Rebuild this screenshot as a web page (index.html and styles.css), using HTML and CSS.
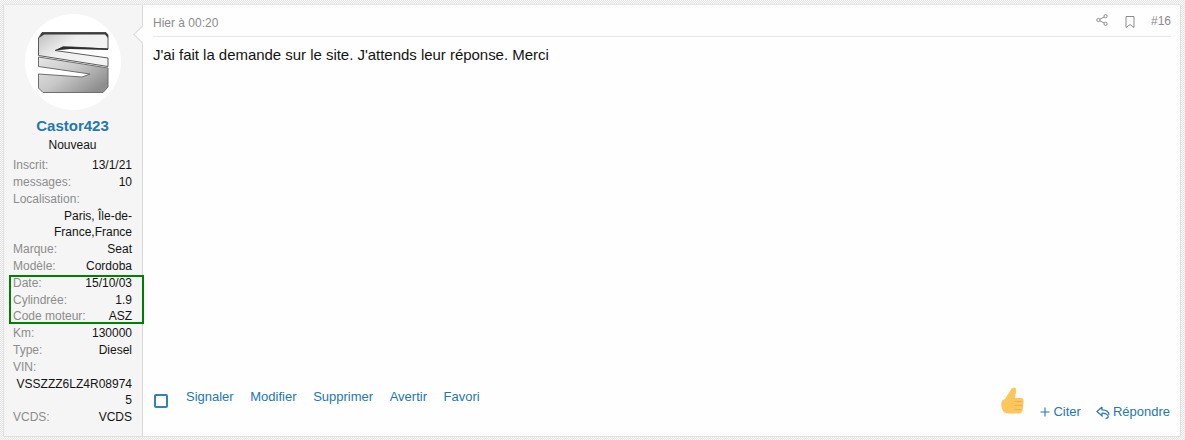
FILE: index.html
```html
<!DOCTYPE html>
<html lang="fr">
<head>
    <meta charset="UTF-8">
    <title>Message #16</title>
    <link rel="stylesheet" href="styles.css">
</head>
<body>
    <article class="message">
        <aside class="user">
            <div class="avatar">
                <svg viewBox="37 31 72 63" width="72" height="63">
                    <defs>
                        <linearGradient id="top" x1="0" y1="0" x2="1" y2="0.7">
                            <stop offset="0" stop-color="#bdbdbd"/>
                            <stop offset="0.45" stop-color="#efefef"/>
                            <stop offset="1" stop-color="#f4f4f4"/>
                        </linearGradient>
                        <linearGradient id="bottom" x1="0" y1="0" x2="1" y2="0.7">
                            <stop offset="0" stop-color="#e6e6e6"/>
                            <stop offset="0.5" stop-color="#c8c8c8"/>
                            <stop offset="1" stop-color="#8e8e8e"/>
                        </linearGradient>
                    </defs>
                    <path d="M38.500 38L42 32.500H106L108 35V49L72 47H63L55 50.500L108 58V66.500L38.500 55.500Z" fill="url(#top)" stroke="#5c5c5c" stroke-width="1"/>
                    <path d="M42 32.500H106L108 35V38L105 34.500H44L39 38Z" fill="#3c3c3c"/>
                    <path d="M55 50.500L63 46.500L108 48.500V50L70 49Z" fill="#2e2e2e"/>
                    <path d="M38.500 57L108 68V87L103 92.500H43L38.500 88V74L82 77L90 74L38.500 66.500Z" fill="url(#bottom)" stroke="#6e6e6e" stroke-width="1"/>
                </svg>
            </div>
            <a class="username" href="#">Castor423</a>
            <div class="user-title">Nouveau</div>
            <dl class="extras">
                <div class="pair"><dt>Inscrit:</dt><dd>13/1/21</dd></div>
                <div class="pair"><dt>messages:</dt><dd>10</dd></div>
                <div class="pair stacked"><dt>Localisation:</dt><dd>Paris, Île-de-France,France</dd></div>
                <div class="pair"><dt>Marque:</dt><dd>Seat</dd></div>
                <div class="pair"><dt>Modèle:</dt><dd>Cordoba</dd></div>
                <div class="highlight">
                    <div class="pair"><dt>Date:</dt><dd>15/10/03</dd></div>
                    <div class="pair"><dt>Cylindrée:</dt><dd>1.9</dd></div>
                    <div class="pair"><dt>Code moteur:</dt><dd>ASZ</dd></div>
                </div>
                <div class="pair"><dt>Km:</dt><dd>130000</dd></div>
                <div class="pair"><dt>Type:</dt><dd>Diesel</dd></div>
                <div class="pair stacked"><dt>VIN:</dt><dd>VSSZZZ6LZ4R089745</dd></div>
                <div class="pair"><dt>VCDS:</dt><dd>VCDS</dd></div>
            </dl>
        </aside>
        <div class="main">
            <header class="attribution">
                <span class="date">Hier à 00:20</span>
                <div class="tools">
                    <svg class="tool share" viewBox="0 0 12 12" width="12" height="12">
                        <circle cx="9.600" cy="2.200" r="1.600"/>
                        <circle cx="2.400" cy="6" r="1.600"/>
                        <circle cx="9.600" cy="9.800" r="1.600"/>
                        <path d="M3.800 5.200L8.200 3M3.800 6.800L8.200 9"/>
                    </svg>
                    <svg class="tool bookmark" viewBox="0 0 10 12" width="10" height="12">
                        <path d="M1 0.500H9V11.500L5 8.500L1 11.500Z"/>
                    </svg>
                    <span class="number">#16</span>
                </div>
            </header>
            <div class="body">J'ai fait la demande sur le site. J'attends leur réponse. Merci</div>
            <footer class="actions">
                <div class="actions-left">
                    <span class="check"></span>
                    <a href="#">Signaler</a>
                    <a href="#">Modifier</a>
                    <a href="#">Supprimer</a>
                    <a href="#">Avertir</a>
                    <a href="#">Favori</a>
                </div>
                <div class="actions-right">
                    <svg class="thumb" viewBox="0 0 23 27" width="23" height="27">
                        <path d="M4 12L10 2.500Q12 -0.500 14.500 1Q15.500 2 15 5L14 11H21Q23 12 22.500 15L21.500 24Q20.500 26.500 18 26.500H8Q2.500 26.500 1 22Q-0.500 17 1 14Q2 12.500 4 12Z" fill="#fcc65f"/>
                        <path d="M13.500 14.500H21.500M13.500 18.500H21.500M13.500 22.500H20.500" stroke="#eeb050" stroke-width="1" fill="none"/>
                    </svg>
                    <a class="cite" href="#">
                        <svg viewBox="0 0 11 11" width="10" height="10"><path d="M5.500 0.500V10.500M0.500 5.500H10.500"/></svg>
                        Citer
                    </a>
                    <a class="reply" href="#">
                        <svg viewBox="0 0 14 13" width="14" height="13"><path d="M6 1L1 5.500L6 10V7.200Q10 7 11.500 9Q13.500 12 9.500 12.500M6 1V3.800Q13 4 13 9"/></svg>
                        Répondre
                    </a>
                </div>
            </footer>
        </div>
    </article>
</body>
</html>
```

FILE: styles.css
```css
* {
    box-sizing: border-box;
}
html, body {
    height: 100%;
}
body {
    margin: 0;
    padding: 4px 4px 3px 3px;
    font-family: "Liberation Sans", Arial, sans-serif;
    color: #141414;
    background-color: #fafafa;
    background-image: repeating-conic-gradient(#e4e4e4 0 25%, #fafafa 0 50%);
    background-size: 2px 2px;
}
a {
    color: #2577b1;
    text-decoration: none;
}
.message {
    display: flex;
    height: 100%;
    background: #fefefe;
    border: 1px solid #dfdfdf;
    border-top-color: #e4e4e4;
    border-radius: 2px;
}
.user {
    position: relative;
    flex: 0 0 139px;
    padding: 9px 10px 0 9px;
    background: #f5f5f5;
    border-right: 1px solid #d8d8d8;
    text-align: center;
}
.user::after {
    content: "";
    position: absolute;
    top: 23px;
    right: -7px;
    width: 12px;
    height: 12px;
    background: #fefefe;
    border-left: 1px solid #d8d8d8;
    border-bottom: 1px solid #d8d8d8;
    transform: rotate(45deg);
}
.avatar {
    display: flex;
    align-items: center;
    justify-content: center;
    width: 96px;
    height: 96px;
    margin: 0 auto;
    border-radius: 50%;
    background: #fff;
}
.username {
    display: block;
    margin-top: 7px;
    font-size: 15px;
    line-height: 18px;
    font-weight: bold;
}
.user-title {
    font-size: 12px;
    line-height: 18px;
    margin-top: 1px;
}
.extras {
    margin: 3.200px 0 0;
    font-size: 12px;
    line-height: 16.800px;
    text-align: left;
}
.pair {
    display: flex;
    justify-content: space-between;
}
.pair.stacked {
    display: block;
}
dt {
    color: #8c8c8c;
}
dd {
    margin: 0;
    text-align: right;
    overflow-wrap: anywhere;
}
.highlight {
    position: relative;
}
.highlight::after {
    content: "";
    position: absolute;
    top: 0;
    left: -4px;
    right: -12px;
    height: 49px;
    box-sizing: border-box;
    border: 2px solid #008000;
}
.main {
    flex: 1;
    display: flex;
    flex-direction: column;
    padding: 0 9px 0 10px;
}
.attribution {
    display: flex;
    justify-content: space-between;
    align-items: center;
    height: 32px;
    padding-top: 5px;
    border-bottom: 1px solid #e8e8e8;
    font-size: 12px;
    color: #8c8c8c;
}
.tools {
    display: flex;
    align-items: center;
    margin-top: -4px;
}
.tool {
    fill: none;
    stroke: #8c8c8c;
    stroke-width: 1;
}
.share {
    margin: 0 17px 3px 0;
}
.bookmark {
    margin: 2px 16px 0 0;
}
.body {
    flex: 1;
    padding-top: 7px;
    font-size: 15px;
    line-height: 21px;
    letter-spacing: -0.030px;
}
.actions {
    display: flex;
    justify-content: space-between;
    align-items: flex-end;
    height: 60px;
    padding: 0 1px 16px 0;
    font-size: 13px;
}
.actions-left {
    display: flex;
    align-items: flex-start;
    gap: 16.600px;
    margin-bottom: 12px;
    line-height: 16px;
}
.check {
    width: 14px;
    height: 14px;
    margin: 5px 1.400px 0 1px;
    border: 2px solid #3580b8;
    border-radius: 2px;
    background: #fff;
}
.actions-right {
    display: flex;
    align-items: flex-end;
    line-height: 16px;
}
.thumb {
    margin: 0 16px 6px 0;
}
.cite, .reply {
    display: flex;
    align-items: center;
    gap: 3px;
}
.reply {
    margin-left: 15px;
}
.cite svg, .reply svg {
    fill: none;
    stroke: #2577b1;
    stroke-width: 1.200;
}
```
